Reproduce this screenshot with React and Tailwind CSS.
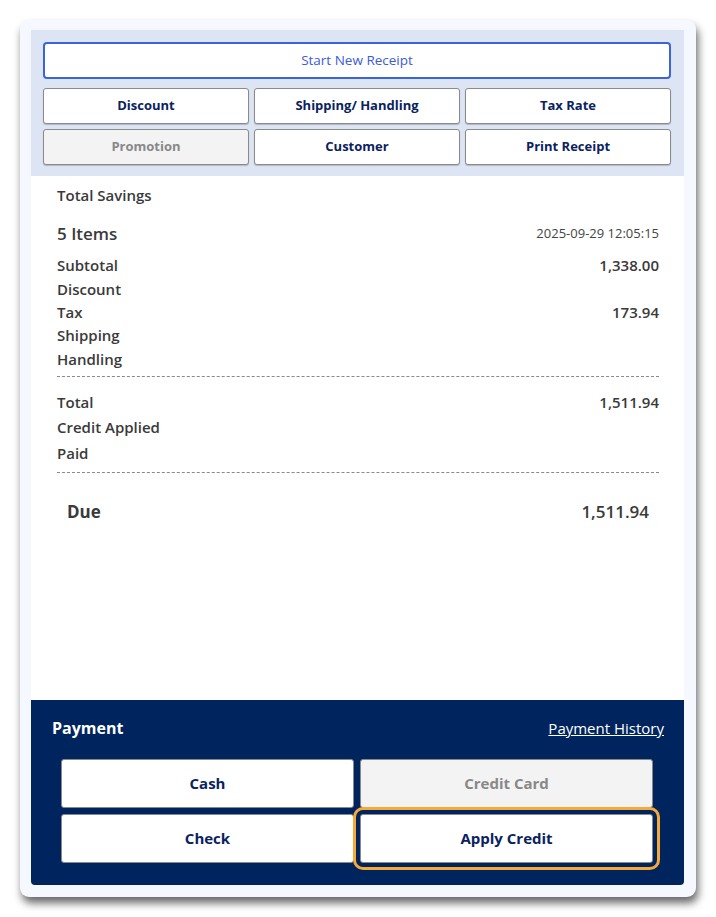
export default function App() {
  const topButtons = [
    { label: "Discount" },
    { label: "Shipping/ Handling" },
    { label: "Tax Rate" },
    { label: "Promotion", disabled: true },
    { label: "Customer" },
    { label: "Print Receipt" },
  ];

  const lines = [
    ["Subtotal", "1,338.00"],
    ["Discount", ""],
    ["Tax", "173.94"],
    ["Shipping", ""],
    ["Handling", ""],
  ];

  const totals = [
    ["Total", "1,511.94"],
    ["Credit Applied", ""],
    ["Paid", ""],
  ];

  return (
    <div className="min-h-screen bg-white p-5 font-['Open_Sans',sans-serif] text-[#3a3a3a]">
      <div className="flex h-[877px] w-[676px] flex-col rounded-[9px] bg-[#f5f8fe] pt-[10px] pr-[12px] pb-[12px] pl-[11px] shadow-[2px_6px_8px_rgba(0,0,0,0.6)]">
        {/* action buttons */}
        <div className="bg-[#dde5f4] px-[12px] pt-[12px] pb-[11px] pr-[13px]">
          <button className="h-[37px] w-full rounded-[4px] border-2 border-[#3a63e0] bg-white text-[13.5px] text-[#3b5bdb]">
            Start New Receipt
          </button>
          <div className="mt-[9px] grid grid-cols-3 gap-[5px]">
            {topButtons.map((b) => (
              <button
                key={b.label}
                className={`h-[36px] rounded-[3px] border border-[#8a8a8a] text-[13px] font-bold shadow-[0_1px_1px_rgba(0,0,0,0.2)] ${
                  b.disabled ? "bg-[#f3f3f3] text-[#888]" : "bg-white text-[#0a2260]"
                }`}
              >
                {b.label}
              </button>
            ))}
          </div>
        </div>

        {/* receipt body */}
        <div className="flex-1 bg-white pl-[26px] pr-[25px] pt-[8px]">
          <div className="h-[22px] text-[15px] font-[550] leading-[22px]">Total Savings</div>

          <div className="mt-[16px] flex h-[24px] items-center justify-between">
            <span className="text-[17px] font-[550]">5 Items</span>
            <span className="text-[13px] text-[#444]">2025-09-29 12:05:15</span>
          </div>

          <div className="mt-[8px]">
            {lines.map(([k, v]) => (
              <div key={k} className="flex h-[23.3px] items-center justify-between text-[15px] font-[550]">
                <span>{k}</span>
                <span>{v}</span>
              </div>
            ))}
          </div>

          <div className="mt-[6px] border-t border-dashed border-[#8a8a8a]" />

          <div className="mt-[12px]">
            {totals.map(([k, v]) => (
              <div key={k} className="flex h-[25.5px] items-center justify-between text-[15px] font-[550]">
                <span>{k}</span>
                <span>{v}</span>
              </div>
            ))}
          </div>

          <div className="mt-[6px] border-t border-dashed border-[#8a8a8a]" />

          <div className="mt-[26px] flex h-[26px] items-center justify-between px-[10px] text-[17px]">
            <span className="font-bold">Due</span>
            <span className="font-[550]">1,511.94</span>
          </div>
        </div>

        {/* payment */}
        <div className="h-[185px] rounded-b-[4px] bg-[#00245e] pl-[21px] pr-[20px] pt-[16px]">
          <div className="flex h-[24px] items-center justify-between">
            <span className="text-[16px] font-bold text-white">Payment</span>
            <a className="text-[15px] text-white underline">Payment History</a>
          </div>
          <div className="mt-[19px] grid grid-cols-2 gap-[6px] pl-[9px] pr-[11px]">
            <button className="h-[49px] rounded-[3px] border border-[#888] bg-white text-[15px] font-bold text-[#0a2260]">
              Cash
            </button>
            <button className="h-[49px] rounded-[3px] border border-[#888] bg-[#f3f3f3] text-[15px] font-bold text-[#888]">
              Credit Card
            </button>
            <button className="h-[49px] rounded-[3px] border border-[#888] bg-white text-[15px] font-bold text-[#0a2260]">
              Check
            </button>
            <button className="h-[49px] rounded-[3px] border border-[#888] bg-white text-[15px] font-bold text-[#0a2260] outline-3 outline-offset-4 outline-[#f6a935]">
              Apply Credit
            </button>
          </div>
        </div>
      </div>
    </div>
  );
}
